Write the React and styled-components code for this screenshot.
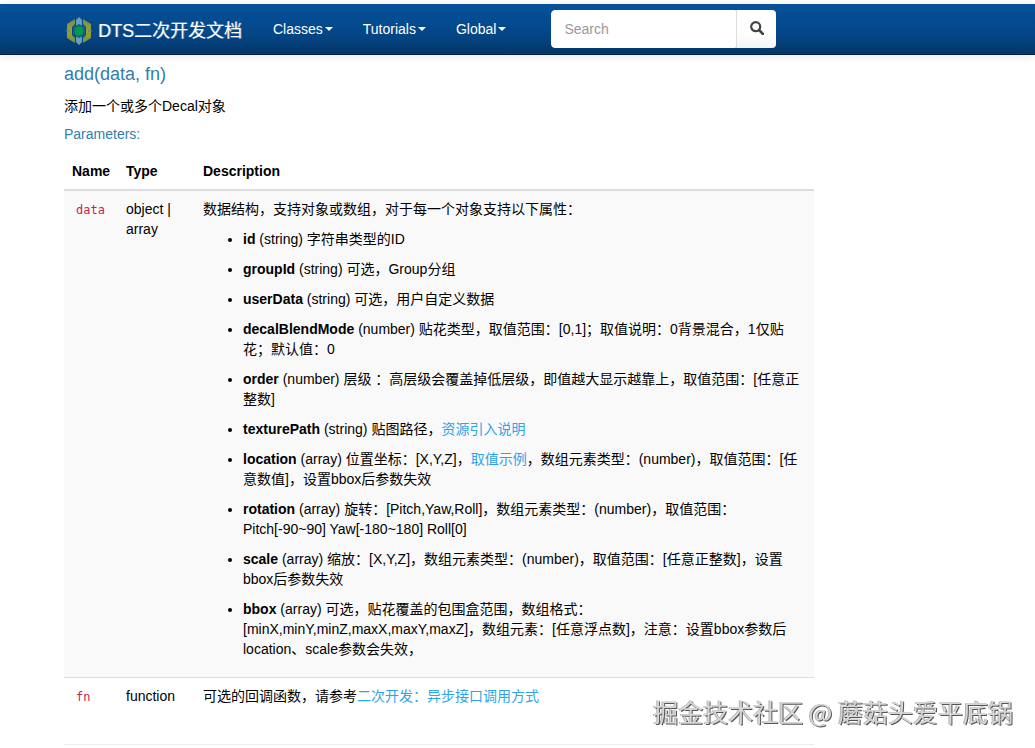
import React from "react";
import styled, { createGlobalStyle } from "styled-components";

const headingColor = "#317eac";
const linkColor = "#2fa4e7";
const borderColor = "#dddddd";

const GlobalStyle = createGlobalStyle`
  * {
    box-sizing: border-box;
  }
  body {
    margin: 0;
    background: #ffffff;
    color: #000000;
    font-family: "Liberation Sans", "Noto Sans CJK SC", sans-serif;
    font-size: 14px;
    line-height: 20px;
  }
  button, input {
    font-family: inherit;
    font-size: 14px;
  }
`;

// top bar
const Navbar = styled.nav`
  display: flex;
  align-items: center;
  height: 51px;
  margin-top: 4px;
  padding: 0 64px;
  background: linear-gradient(#04519b, #044687 60%, #033769);
  border-bottom: 1px solid #022241;
  box-shadow: 0 1px 10px rgba(0, 0, 0, 0.1);
`;

const Brand = styled.a`
  display: flex;
  align-items: center;
  gap: 4px;
  margin-right: 16px;
  padding-top: 3px;
  color: #ffffff;
  font-size: 18px;
  text-decoration: none;
  text-shadow: 1px 0 0 rgba(255, 255, 255, 0.35);
  white-space: nowrap;
`;

const Menu = styled.div`
  display: flex;
`;

const MenuButton = styled.button`
  display: flex;
  align-items: center;
  gap: 2px;
  padding: 15px;
  border: 0;
  background: none;
  color: #ffffff;
  line-height: 20px;
  cursor: pointer;
`;

const Caret = styled.span`
  border-top: 4px solid #ffffff;
  border-left: 4px solid transparent;
  border-right: 4px solid transparent;
`;

const SearchForm = styled.form`
  display: flex;
  width: 225px;
  height: 38px;
  margin-left: 30px;
`;

const SearchInput = styled.input`
  flex: 1;
  min-width: 0;
  padding: 8px 12px;
  border: 1px solid #ffffff;
  border-radius: 4px 0 0 4px;
  background: #ffffff;
  color: #555555;
  &::placeholder {
    color: #999999;
  }
`;

const SearchButton = styled.button`
  display: flex;
  align-items: center;
  justify-content: center;
  width: 40px;
  padding: 0 0 2px;
  border: 0;
  border-left: 1px solid ${borderColor};
  border-radius: 0 4px 4px 0;
  background: linear-gradient(#ffffff 60%, #f5f5f5);
  cursor: pointer;
`;

// document body
const Content = styled.main`
  max-width: 878px;
  padding: 9px 64px 0;
`;

const MethodName = styled.h4`
  margin: 0 0 12px;
  color: ${headingColor};
  font-size: 18px;
  font-weight: 400;
  line-height: 20px;
`;

const Text = styled.p`
  margin: 0 0 10px;
`;

const SectionTitle = styled.h5`
  margin: 0 0 11px;
  color: ${headingColor};
  font-size: 14px;
  font-weight: 400;
  line-height: 16px;
`;

const ParamTable = styled.table`
  width: 100%;
  margin-bottom: 20px;
  border-spacing: 0;
  table-layout: fixed;
`;

const Th = styled.th`
  width: ${props => props.$width || "auto"};
  padding: 8px;
  border-bottom: 2px solid ${borderColor};
  text-align: left;
`;

const Row = styled.tr`
  vertical-align: top;
  &:nth-child(odd) {
    background: #f9f9f9;
  }
  & + & > td {
    border-top: 1px solid ${borderColor};
  }
`;

const Td = styled.td`
  padding: 8px;
`;

const Code = styled.code`
  padding: 2px 4px;
  color: #c7254e;
  font-family: "DejaVu Sans Mono", monospace;
  font-size: 12px;
`;

const List = styled.ul`
  margin: 0 0 10px;
  padding-left: 40px;
`;

const Item = styled.li`
  & + & {
    margin-top: 10px;
  }
`;

const Link = styled.a`
  color: ${linkColor};
  text-decoration: none;
`;

const Divider = styled.hr`
  margin: 0;
  border: 0;
  border-top: 1px solid #eeeeee;
`;

// signature laid over the bottom corner
const Signature = styled.div`
  position: fixed;
  right: 22px;
  bottom: 19px;
  color: #d6d6d6;
  font-family: "Noto Sans CJK SC", sans-serif;
  font-size: 25px;
  line-height: 36px;
  text-shadow: 1px 1px 0 #555555, -1px 0 0 #b4b4b4;
  white-space: nowrap;
`;

const Logo = () => (
  <svg width="30" height="30" viewBox="0 0 30 30" aria-hidden="true">
    <defs>
      <linearGradient id="bracket" x1="0" y1="0" x2="0" y2="1">
        <stop offset="0" stopColor="#6f9046" />
        <stop offset="0.5" stopColor="#9aa035" />
        <stop offset="1" stopColor="#6f9440" />
      </linearGradient>
    </defs>
    <path d="M11 3L3 8v14l8 5v-5l-3-3v-8l3-3z" fill="url(#bracket)" />
    <path d="M19 3l8 5v14l-8 5v-5l3-3v-8l-3-3z" fill="url(#bracket)" />
    <path d="M12 4l3-3 3 3v6h-6z" fill="#6d9dbd" />
    <path d="M12 20h6v6l-3 3-3-3z" fill="#6d9dbd" />
    <path d="M2 15h4M24 15h4" stroke="#4c8290" strokeWidth="1" />
    <path d="M15 8l6 3v8l-6 3-6-3v-8z" fill="#0f6480" />
    <circle cx="15" cy="15" r="4.500" fill="#07974b" />
  </svg>
);

const SearchIcon = () => (
  <svg width="14" height="14" viewBox="0 0 14 14" aria-hidden="true">
    <circle cx="5.700" cy="5.700" r="4.500" fill="none" stroke="#444444" strokeWidth="2.200" />
    <path d="M9 9l4 4" stroke="#444444" strokeWidth="2.600" strokeLinecap="round" />
  </svg>
);

const menus = ["Classes", "Tutorials", "Global"];

const properties = [
  { name: "id", type: "string", text: "字符串类型的ID" },
  { name: "groupId", type: "string", text: "可选，Group分组" },
  { name: "userData", type: "string", text: "可选，用户自定义数据" },
  {
    name: "decalBlendMode",
    type: "number",
    text: "贴花类型，取值范围：[0,1]；取值说明：0背景混合，1仅贴花；默认值：0"
  },
  {
    name: "order",
    type: "number",
    text: "层级 ：高层级会覆盖掉低层级，即值越大显示越靠上，取值范围：[任意正整数]"
  },
  {
    name: "texturePath",
    type: "string",
    text: <>贴图路径，<Link href="#resource">资源引入说明</Link></>
  },
  {
    name: "location",
    type: "array",
    text: (
      <>
        位置坐标：[X,Y,Z]，<Link href="#example">取值示例</Link>
        ，数组元素类型：(number)，取值范围：[任意数值]，设置bbox后参数失效
      </>
    )
  },
  {
    name: "rotation",
    type: "array",
    text: "旋转：[Pitch,Yaw,Roll]，数组元素类型：(number)，取值范围：Pitch[-90~90] Yaw[-180~180] Roll[0]"
  },
  {
    name: "scale",
    type: "array",
    text: "缩放：[X,Y,Z]，数组元素类型：(number)，取值范围：[任意正整数]，设置bbox后参数失效"
  },
  {
    name: "bbox",
    type: "array",
    text: "可选，贴花覆盖的包围盒范围，数组格式：[minX,minY,minZ,maxX,maxY,maxZ]，数组元素：[任意浮点数]，注意：设置bbox参数后location、scale参数会失效，"
  }
];

const Header = () => (
  <Navbar>
    <Brand href="#home">
      <Logo />
      DTS二次开发文档
    </Brand>
    <Menu>
      {menus.map(name => (
        <MenuButton key={name} type="button" aria-haspopup="true">
          {name}
          <Caret />
        </MenuButton>
      ))}
    </Menu>
    <SearchForm role="search" onSubmit={e => e.preventDefault()}>
      <SearchInput type="text" placeholder="Search" aria-label="Search" />
      <SearchButton type="submit" aria-label="Search">
        <SearchIcon />
      </SearchButton>
    </SearchForm>
  </Navbar>
);

const Params = () => (
  <ParamTable>
    <thead>
      <tr>
        <Th $width="54px">Name</Th>
        <Th $width="77px">Type</Th>
        <Th>Description</Th>
      </tr>
    </thead>
    <tbody>
      <Row>
        <Td><Code>data</Code></Td>
        <Td>object | array</Td>
        <Td>
          <Text>数据结构，支持对象或数组，对于每一个对象支持以下属性：</Text>
          <List>
            {properties.map(item => (
              <Item key={item.name}>
                <b>{item.name}</b> ({item.type}) {item.text}
              </Item>
            ))}
          </List>
        </Td>
      </Row>
      <Row>
        <Td><Code>fn</Code></Td>
        <Td>function</Td>
        <Td>
          <Text>
            可选的回调函数，请参考<Link href="#callback">二次开发：异步接口调用方式</Link>
          </Text>
        </Td>
      </Row>
    </tbody>
  </ParamTable>
);

const App = () => {
  return (
    <>
      <GlobalStyle />
      <Header />
      <Content>
        <MethodName>add(data, fn)</MethodName>
        <Text>添加一个或多个Decal对象</Text>
        <SectionTitle>Parameters:</SectionTitle>
        <Params />
        <Divider />
      </Content>
      <Signature>掘金技术社区 @ 蘑菇头爱平底锅</Signature>
    </>
  );
};

export default App;
